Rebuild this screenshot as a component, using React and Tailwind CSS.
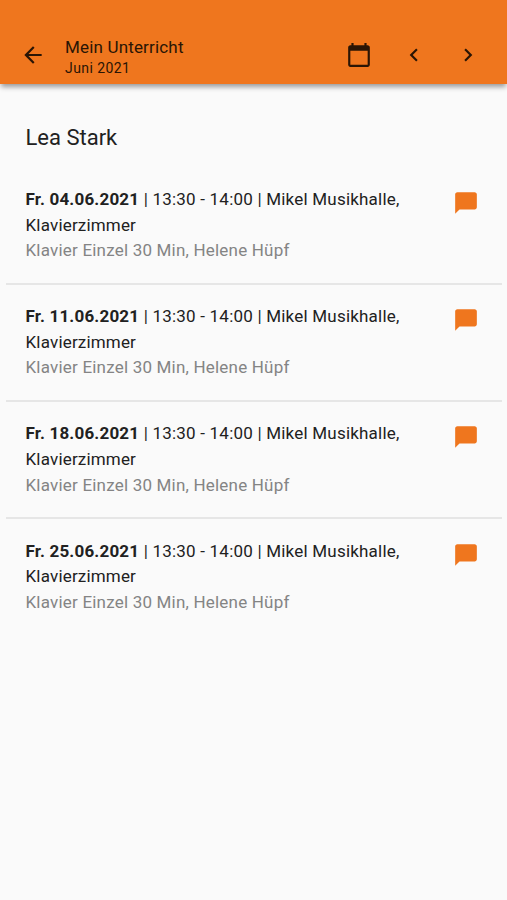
import React from "react";
import {
  MdArrowBack,
  MdCalendarToday,
  MdChatBubble,
  MdChevronLeft,
  MdChevronRight,
} from "react-icons/md";

const lessons = [
  { id: 1, date: "Fr. 04.06.2021" },
  { id: 2, date: "Fr. 11.06.2021" },
  { id: 3, date: "Fr. 18.06.2021" },
  { id: 4, date: "Fr. 25.06.2021" },
];

function LessonRow({ lesson }) {
  return (
    <li className="flex h-[117.2px] items-start justify-between border-b-2 border-[#e6e6e6] pt-[19.5px] pr-[23px] pl-[19.5px] last:border-b-0">
      <div className="text-[17px] leading-[25.6px] tracking-[0.21px] text-[#212121]">
        <p>
          <b className="font-bold tracking-[0.19px]">{lesson.date}</b> | 13:30 -
          14:00 | Mikel Musikhalle,
        </p>
        <p className="tracking-[0.18px]">Klavierzimmer</p>
        <p className="tracking-[0.2px] text-[#848484]">
          Klavier Einzel 30 Min, Helene Hüpf
        </p>
      </div>
      {/* the bubble path has a sharp tail in the lower left corner */}
      <MdChatBubble className="mt-[3px] text-[#ef761e]" size={26} />
    </li>
  );
}

export default function App() {
  return (
    <div className="min-h-screen bg-[#fafafa] font-['Roboto',sans-serif]">
      <header className="flex h-[84px] items-start bg-[#ef761e] pt-[37px] text-[#2a1505] shadow-[0_4px_5px_-1px_rgba(0,0,0,0.38)]">
        <button className="mt-[5px] ml-[20px]">
          <MdArrowBack size={26} />
        </button>
        <div className="ml-[19px] flex-1">
          <h1 className="text-[17px] leading-[21px] tracking-[0.17px]">
            Mein Unterricht
          </h1>
          <p className="text-[14px] leading-[20px] tracking-[0.42px]">
            Juni 2021
          </p>
        </div>
        <div className="mt-[5px] mr-[26px] flex items-center gap-[28.5px]">
          <MdCalendarToday size={26} />
          <MdChevronLeft size={26} />
          <MdChevronRight size={26} />
        </div>
      </header>

      <main className="pt-[38px] pr-[5px] pl-[6px]">
        <h2 className="pl-[19.5px] text-[22px] leading-[32px] text-[#212121]">
          Lea Stark
        </h2>
        <ul className="mt-[13.5px]">
          {lessons.map((lesson) => (
            <LessonRow key={lesson.id} lesson={lesson} />
          ))}
        </ul>
      </main>
    </div>
  );
}
